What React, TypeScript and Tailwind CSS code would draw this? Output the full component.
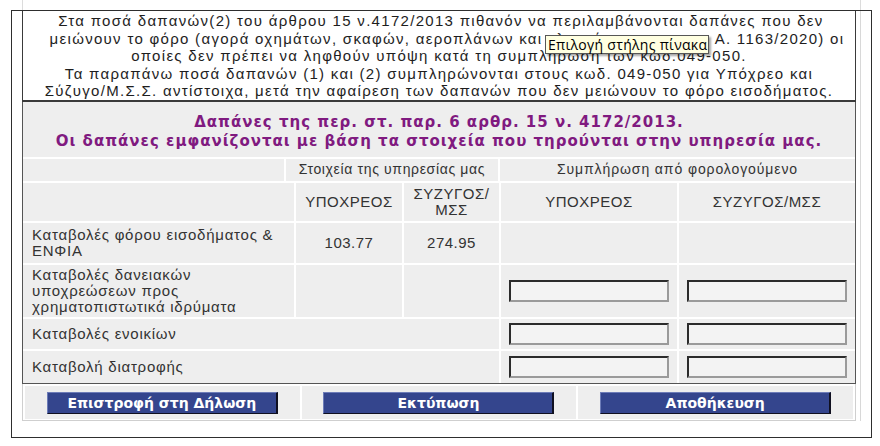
import React from "react";

const inputCls =
  "w-[160px] h-[22px] bg-[#f3f3f3] border-2 border-t-[#2b2b2b] border-l-[#2b2b2b] border-b-[#9a9a9a] border-r-[#9a9a9a]";

const btnCls =
  "w-[231px] h-[22px] bg-[#34458d] text-white font-bold text-[14px] leading-[18px] font-['DejaVu_Sans',Verdana,sans-serif] border border-t-[#6d7cb8] border-l-[#6d7cb8] border-b-[#101020] border-r-[#101020] border-r-2";

function Label({ children }: { children: React.ReactNode }) {
  return (
    <div className="bg-[#eeeeee] flex items-center pl-[9px] pr-2 text-[15px] tracking-[0.75px] leading-[16px] text-[#333]">
      {children}
    </div>
  );
}

function Cell({ children }: { children?: React.ReactNode }) {
  return (
    <div className="bg-[#eeeeee] flex items-center justify-center text-center text-[15px] tracking-[0.5px] leading-[16px] text-[#333]">
      {children}
    </div>
  );
}

export default function App() {
  return (
    <div className="relative w-[880px] h-[446px] bg-white overflow-hidden font-['Liberation_Sans',Arial,sans-serif]">
      <div className="ml-[22px] w-[839px] h-[10px] border-x border-[#dcdcdc]" />
      <div className="ml-[11px] w-[861px] h-[428px] border border-[#2e2e2e]">
        <div className="ml-[10px] w-[839px] h-[410px] border-r border-[#d8d8d8]">
          <div className="w-[834px]">
            {/* Text box */}
            <div className="border-x border-b-2 border-[#3a3a3a] bg-white text-center text-[15px] tracking-[1.3px] leading-[17.5px] text-[#1e1e1e] pt-[1px]">
              <p className="pl-[4px]">Στα ποσά δαπανών(2) του άρθρου 15 ν.4172/2013 πιθανόν να περιλαμβάνονται δαπάνες που δεν</p>
              <p className="pl-[16px]">μειώνουν το φόρο (αγορά οχημάτων, σκαφών, αεροπλάνων και κλπ σύμφωνα με την Α. 1163/2020) οι</p>
              <p>οποίες δεν πρέπει να ληφθούν υπόψη κατά τη συμπλήρωση των κωδ.049-050.</p>
              <p>Τα παραπάνω ποσά δαπανών (1) και (2) συμπληρώνονται στους κωδ. 049-050 για Υπόχρεο και</p>
              <p>Σύζυγο/Μ.Σ.Σ. αντίστοιχα, μετά την αφαίρεση των δαπανών που δεν μειώνουν το φόρο εισοδήματος.</p>
            </div>

            {/* Table */}
            <div className="flex flex-col gap-[2px] bg-white border-x border-b border-[#555]">
              <div className="h-[55px] bg-[#eeeeee] flex flex-col items-center justify-center text-[15px] tracking-[1px] leading-[19px] font-bold text-[#801a80] font-['DejaVu_Sans',Verdana,sans-serif] pt-[6px]">
                <p>Δαπάνες της περ. στ. παρ. 6 αρθρ. 15 ν. 4172/2013.</p>
                <p>Οι δαπάνες εμφανίζονται με βάση τα στοιχεία που τηρούνται στην υπηρεσία μας.</p>
              </div>
              <div className="h-[22px] grid grid-cols-[261px_212px_1fr] gap-[2px]">
                <div className="bg-[#eeeeee]" />
                <div className="bg-[#eeeeee] flex items-center justify-center text-[14px] tracking-[0.65px] text-[#333]">Στοιχεία της υπηρεσίας μας</div>
                <div className="bg-[#eeeeee] flex items-center justify-center text-[14px] tracking-[0.9px] text-[#333]">Συμπλήρωση από φορολογούμενο</div>
              </div>
              <div className="h-[38px] grid grid-cols-[271px_106px_95px_176px_1fr] gap-[2px]">
                <div className="bg-[#eeeeee]" />
                <Cell>ΥΠΟΧΡΕΟΣ</Cell>
                <Cell>
                  ΣΥΖΥΓΟΣ/
                  <br />
                  ΜΣΣ
                </Cell>
                <Cell>ΥΠΟΧΡΕΟΣ</Cell>
                <Cell>ΣΥΖΥΓΟΣ/ΜΣΣ</Cell>
              </div>
              <div className="h-[40px] grid grid-cols-[271px_106px_95px_176px_1fr] gap-[2px]">
                <Label>
                  Καταβολές φόρου εισοδήματος &amp;
                  <br />
                  ΕΝΦΙΑ
                </Label>
                <Cell>103.77</Cell>
                <Cell>274.95</Cell>
                <Cell />
                <Cell />
              </div>
              <div className="h-[52px] grid grid-cols-[271px_106px_95px_176px_1fr] gap-[2px]">
                <Label>
                  <span>
                    Καταβολές δανειακών
                    <br />
                    υποχρεώσεων προς
                    <br />
                    χρηματοπιστωτικά ιδρύματα
                  </span>
                </Label>
                <Cell />
                <Cell />
                <Cell>
                  <div className={inputCls} />
                </Cell>
                <Cell>
                  <div className={inputCls} />
                </Cell>
              </div>
              <div className="h-[30px] grid grid-cols-[476px_176px_1fr] gap-[2px]">
                <Label>Καταβολές ενοικίων</Label>
                <Cell>
                  <div className={inputCls} />
                </Cell>
                <Cell>
                  <div className={inputCls} />
                </Cell>
              </div>
              <div className="h-[32px] grid grid-cols-[476px_176px_1fr] gap-[2px]">
                <Label>Καταβολή διατροφής</Label>
                <Cell>
                  <div className={inputCls} />
                </Cell>
                <Cell>
                  <div className={inputCls} />
                </Cell>
              </div>
            </div>

            {/* Buttons */}
            <div className="grid grid-cols-3 gap-[2px] bg-white border-x border-b border-[#cfcfcf] p-[2px] pb-[1px]">
              <div className="h-[33px] bg-[#eeeeee] flex items-center justify-center pt-[1px]">
                <button className={btnCls}>Επιστροφή στη Δήλωση</button>
              </div>
              <div className="h-[33px] bg-[#eeeeee] flex items-center justify-center pt-[1px]">
                <button className={btnCls}>Εκτύπωση</button>
              </div>
              <div className="h-[33px] bg-[#eeeeee] flex items-center justify-center pt-[1px]">
                <button className={btnCls}>Αποθήκευση</button>
              </div>
            </div>
          </div>
        </div>
      </div>

      {/* Tooltip */}
      <div className="absolute left-[545px] top-[35px] w-[164px] h-[19px] bg-[#ffffe1] border border-[#575757] shadow-[2px_2px_2px_rgba(0,0,0,0.35)] flex items-center pl-[2px] text-[14px] tracking-[0.3px] leading-[17px] text-black font-['Open_Sans','Noto_Sans',sans-serif] whitespace-nowrap">
        Επιλογή στήλης πίνακα
      </div>
    </div>
  );
}
